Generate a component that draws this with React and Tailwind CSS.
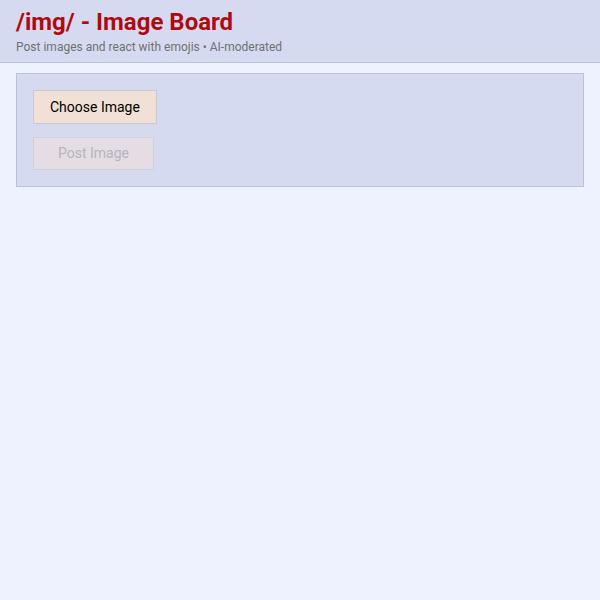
import React from 'react';

const App = () => {
  return (
    <div className="min-h-[600px] bg-[#eef2ff] font-['Roboto',sans-serif]">
      <header className="bg-[#d6daf0] border-b border-[#b7c5d9] px-4 pt-[7px] pb-[7px]">
        <h1 className="text-[24px] leading-[30px] font-bold text-[#af0a0f]">/img/ - Image Board</h1>
        <p className="text-[12px] leading-[16px] mt-[2px] text-[#707070]">
          Post images and react with emojis • AI-moderated
        </p>
      </header>
      <main className="px-4 pt-[10px]">
        <div className="bg-[#d6daf0] border border-[#b7c5d9] p-4 flex flex-col items-start gap-[13px]">
          <button className="bg-[#f0e0d6] border border-[#c8c8d0] px-4 h-[34px] text-[14px] text-black">
            Choose Image
          </button>
          <button disabled className="bg-[#e4dde4] border border-[#cfd0de] px-6 h-[33px] text-[14px] text-[#b8b3c0]">
            Post Image
          </button>
        </div>
      </main>
    </div>
  );
};

export default App;
